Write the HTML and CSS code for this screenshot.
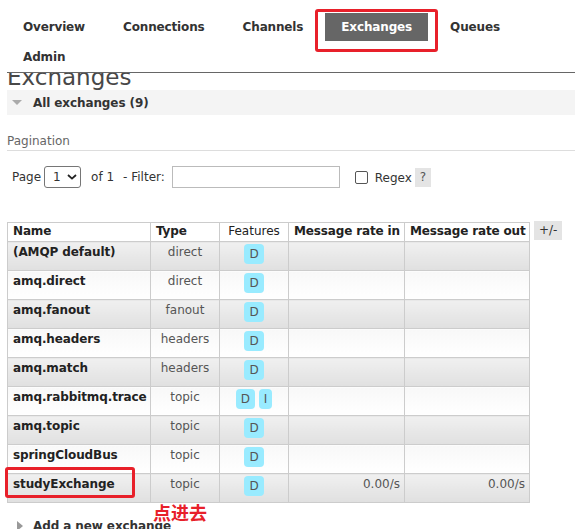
FILE: index.html
```html
<!DOCTYPE html>
<html lang="en">
<head>
<meta charset="utf-8">
<title>RabbitMQ Management - Exchanges</title>
<link rel="stylesheet" href="styles.css">
</head>
<body>
<header class="topbar">
  <nav>
    <ul class="menu">
      <li><a href="#">Overview</a></li>
      <li><a href="#">Connections</a></li>
      <li><a href="#">Channels</a></li>
      <li class="selected"><a href="#">Exchanges</a><span class="mark mark-tab"></span></li>
      <li><a href="#">Queues</a></li>
      <li><a href="#">Admin</a></li>
    </ul>
  </nav>
</header>

<main class="main">
  <h1 class="page-title">Exchanges</h1>

  <section class="section">
    <h2 class="section-head open"><span class="arrow"></span>All exchanges (9)</h2>
    <div class="section-body">
      <h3 class="sub">Pagination</h3>
      <div class="pager">
        <span>Page</span>
        <span class="select-wrap">
          <select class="page-select"><option>1</option></select>
          <svg class="chevron" width="10" height="6" viewBox="0 0 10 6"><path d="M1 1 L5 4.6 L9 1" fill="none" stroke="#222" stroke-width="1.8"/></svg>
        </span>
        <span class="of">of 1</span>
        <span class="filter-label">- Filter:</span>
        <input class="filter" type="text">
        <input class="regex" type="checkbox" id="regex">
        <label class="regex-label" for="regex">Regex</label>
        <span class="help">?</span>
      </div>

      <div class="list-wrap">
        <table class="list">
          <colgroup>
            <col class="c-name"><col class="c-type"><col class="c-feat"><col class="c-in"><col class="c-out">
          </colgroup>
          <thead>
            <tr>
              <th>Name</th>
              <th>Type</th>
              <th class="plain">Features</th>
              <th>Message rate in</th>
              <th>Message rate out</th>
            </tr>
          </thead>
          <tbody>
            <tr class="alt1"><td class="name">(AMQP default)</td><td class="type">direct</td><td class="feat"><abbr>D</abbr></td><td class="rate"></td><td class="rate"></td></tr>
            <tr class="alt2"><td class="name">amq.direct</td><td class="type">direct</td><td class="feat"><abbr>D</abbr></td><td class="rate"></td><td class="rate"></td></tr>
            <tr class="alt1"><td class="name">amq.fanout</td><td class="type">fanout</td><td class="feat"><abbr>D</abbr></td><td class="rate"></td><td class="rate"></td></tr>
            <tr class="alt2"><td class="name">amq.headers</td><td class="type">headers</td><td class="feat"><abbr>D</abbr></td><td class="rate"></td><td class="rate"></td></tr>
            <tr class="alt1"><td class="name">amq.match</td><td class="type">headers</td><td class="feat"><abbr>D</abbr></td><td class="rate"></td><td class="rate"></td></tr>
            <tr class="alt2"><td class="name">amq.rabbitmq.trace</td><td class="type">topic</td><td class="feat"><abbr>D</abbr> <abbr>I</abbr></td><td class="rate"></td><td class="rate"></td></tr>
            <tr class="alt1"><td class="name">amq.topic</td><td class="type">topic</td><td class="feat"><abbr>D</abbr></td><td class="rate"></td><td class="rate"></td></tr>
            <tr class="alt2"><td class="name">springCloudBus</td><td class="type">topic</td><td class="feat"><abbr>D</abbr></td><td class="rate"></td><td class="rate"></td></tr>
            <tr class="alt1"><td class="name">studyExchange</td><td class="type">topic</td><td class="feat"><abbr>D</abbr></td><td class="rate">0.00/s</td><td class="rate">0.00/s</td></tr>
          </tbody>
        </table>
        <span class="toggle">+/-</span>
        <span class="mark mark-row"></span>
        <span class="note">点进去</span>
      </div>
    </div>
  </section>

  <section class="section">
    <h2 class="section-head closed"><span class="arrow"></span>Add a new exchange</h2>
  </section>
</main>
</body>
</html>
```

FILE: styles.css
```css
html, body {
  margin: 0;
  padding: 0;
}

body {
  font-family: "DejaVu Sans", Verdana, sans-serif;
  font-size: 12px;
  color: #444;
  background: #fff;
  overflow: hidden;
}

/* top navigation, stays over the scrolled page */
.topbar {
  position: fixed;
  top: 0;
  left: 7px;
  right: 0;
  z-index: 10;
  background: #fff;
  border-bottom: 1px solid #666;
}

.menu {
  list-style: none;
  margin: 0;
  padding: 13px 0 1px 0;
  display: flex;
  flex-wrap: wrap;
  column-gap: 6px;
  row-gap: 2px;
}

.menu li {
  position: relative;
}

.menu a {
  display: block;
  padding: 7px 16px;
  line-height: 14px;
  font-weight: bold;
  letter-spacing: -0.15px;
  color: #333;
  text-decoration: none;
}

.menu .selected a {
  background: #666;
  color: #fff;
}

/* red annotation frames */
.mark {
  position: absolute;
  box-sizing: border-box;
  border: 3px solid #e8202a;
  border-radius: 3px;
  pointer-events: none;
}

.mark-tab {
  top: -4px;
  left: -10px;
  right: -10px;
  bottom: -11px;
}

.main {
  padding: 64px 0 0 7px;
}

.page-title {
  margin: 0;
  font-size: 23px;
  line-height: 26px;
  font-weight: normal;
  color: #484848;
}

/* collapsible section headers */
.section-head {
  margin: 0;
  height: 25px;
  display: flex;
  align-items: center;
  padding-left: 5px;
  font-size: 12px;
  font-weight: bold;
  letter-spacing: -0.1px;
  color: #333;
}

.section-head.open {
  background: #f4f4f4;
}

.section-head.open .arrow {
  width: 0;
  height: 0;
  border-left: 5px solid transparent;
  border-right: 5px solid transparent;
  border-top: 5px solid #aaa;
  margin-right: 11px;
}

.section-head.closed .arrow {
  width: 0;
  height: 0;
  border-top: 5px solid transparent;
  border-bottom: 5px solid transparent;
  border-left: 6px solid #999;
  margin-left: 5px;
  margin-right: 10px;
}

.section-body {
  padding-bottom: 10px;
}

.sub {
  margin: 19px 0 0;
  padding-bottom: 1px;
  font-size: 12px;
  line-height: 15px;
  font-weight: normal;
  color: #666;
  border-bottom: 1px solid #ddd;
}

/* pagination / filter row */
.pager {
  margin-top: 15px;
  height: 22px;
  display: flex;
  align-items: center;
  padding-left: 5px;
  color: #333;
}

.select-wrap {
  position: relative;
  display: inline-block;
  margin-left: 3px;
  height: 22px;
}

.page-select {
  appearance: none;
  -webkit-appearance: none;
  box-sizing: border-box;
  width: 37px;
  height: 22px;
  margin: 0;
  padding: 0 0 0 8px;
  border: 1px solid #767676;
  border-radius: 3px;
  background: #fff;
  font-family: "DejaVu Sans", Verdana, sans-serif;
  font-size: 12px;
  color: #333;
}

.chevron {
  position: absolute;
  left: 23px;
  top: 8px;
  pointer-events: none;
}

.of {
  margin-left: 10px;
}

.filter-label {
  margin-left: 9px;
}

.filter {
  box-sizing: border-box;
  width: 168px;
  height: 22px;
  margin: 0 0 0 7px;
  padding: 0 4px;
  border: 1px solid #bbb;
  border-radius: 0;
  font-family: "DejaVu Sans", Verdana, sans-serif;
  font-size: 12px;
}

.regex {
  appearance: none;
  -webkit-appearance: none;
  box-sizing: border-box;
  width: 13px;
  height: 13px;
  margin: 0 0 0 15px;
  border: 1px solid #555;
  border-radius: 2px;
  background: #fff;
}

.regex-label {
  margin-left: 7px;
  margin-top: 2px;
}

.help {
  margin-left: 3px;
  margin-top: 1px;
  padding: 2px 5px;
  line-height: 15px;
  background: #e4e4e4;
  color: #555;
}

/* exchanges table */
.list-wrap {
  position: relative;
  margin-top: 34px;
  display: flex;
  align-items: flex-start;
  gap: 4px;
}

.list {
  border-collapse: collapse;
  table-layout: fixed;
  width: 523px;
}

.c-name { width: 143px; }
.c-type { width: 69px; }
.c-feat { width: 69px; }
.c-in   { width: 116px; }
.c-out  { width: 125px; }

.list th,
.list td {
  border: 1px solid #ccc;
  line-height: 15px;
  white-space: nowrap;
}

.list th {
  padding: 1px 5px 2px;
  text-align: left;
  font-weight: bold;
  letter-spacing: -0.15px;
  color: #222;
  background: #fff;
}

.list th.plain {
  font-weight: normal;
  letter-spacing: 0;
  text-align: center;
}

.list td {
  padding: 3px 5px 6px;
  vertical-align: top;
}

.list tr.alt1 td {
  background: linear-gradient(to bottom, #f0f0f0 0%, #e0e0e0 100%);
}

.list tr.alt2 td {
  background: linear-gradient(to bottom, #f8f8f8 0%, #ffffff 100%);
}

.list td.name {
  font-weight: bold;
  letter-spacing: -0.1px;
  color: #222;
}

.list td.type {
  text-align: center;
  color: #555;
}

.list td.feat {
  text-align: center;
}

.list td.rate {
  text-align: right;
  padding-right: 4px;
  color: #555;
}

.list abbr {
  display: inline-block;
  vertical-align: top;
  margin-top: -1px;
  height: 20px;
  line-height: 20px;
  padding: 0 5px;
  border-radius: 4px;
  background: #99ebff;
  color: #555;
  text-decoration: none;
}

.toggle {
  margin-top: -1px;
  padding: 2px 5px;
  line-height: 15px;
  background: #e4e4e4;
  color: #333;
}

.mark-row {
  left: -2px;
  top: 245px;
  width: 130px;
  height: 31px;
}

.note {
  position: absolute;
  left: 146px;
  top: 281px;
  font-family: "Noto Sans CJK SC", sans-serif;
  font-size: 18px;
  line-height: 18px;
  font-weight: bold;
  color: #e8202a;
  white-space: nowrap;
}
```
